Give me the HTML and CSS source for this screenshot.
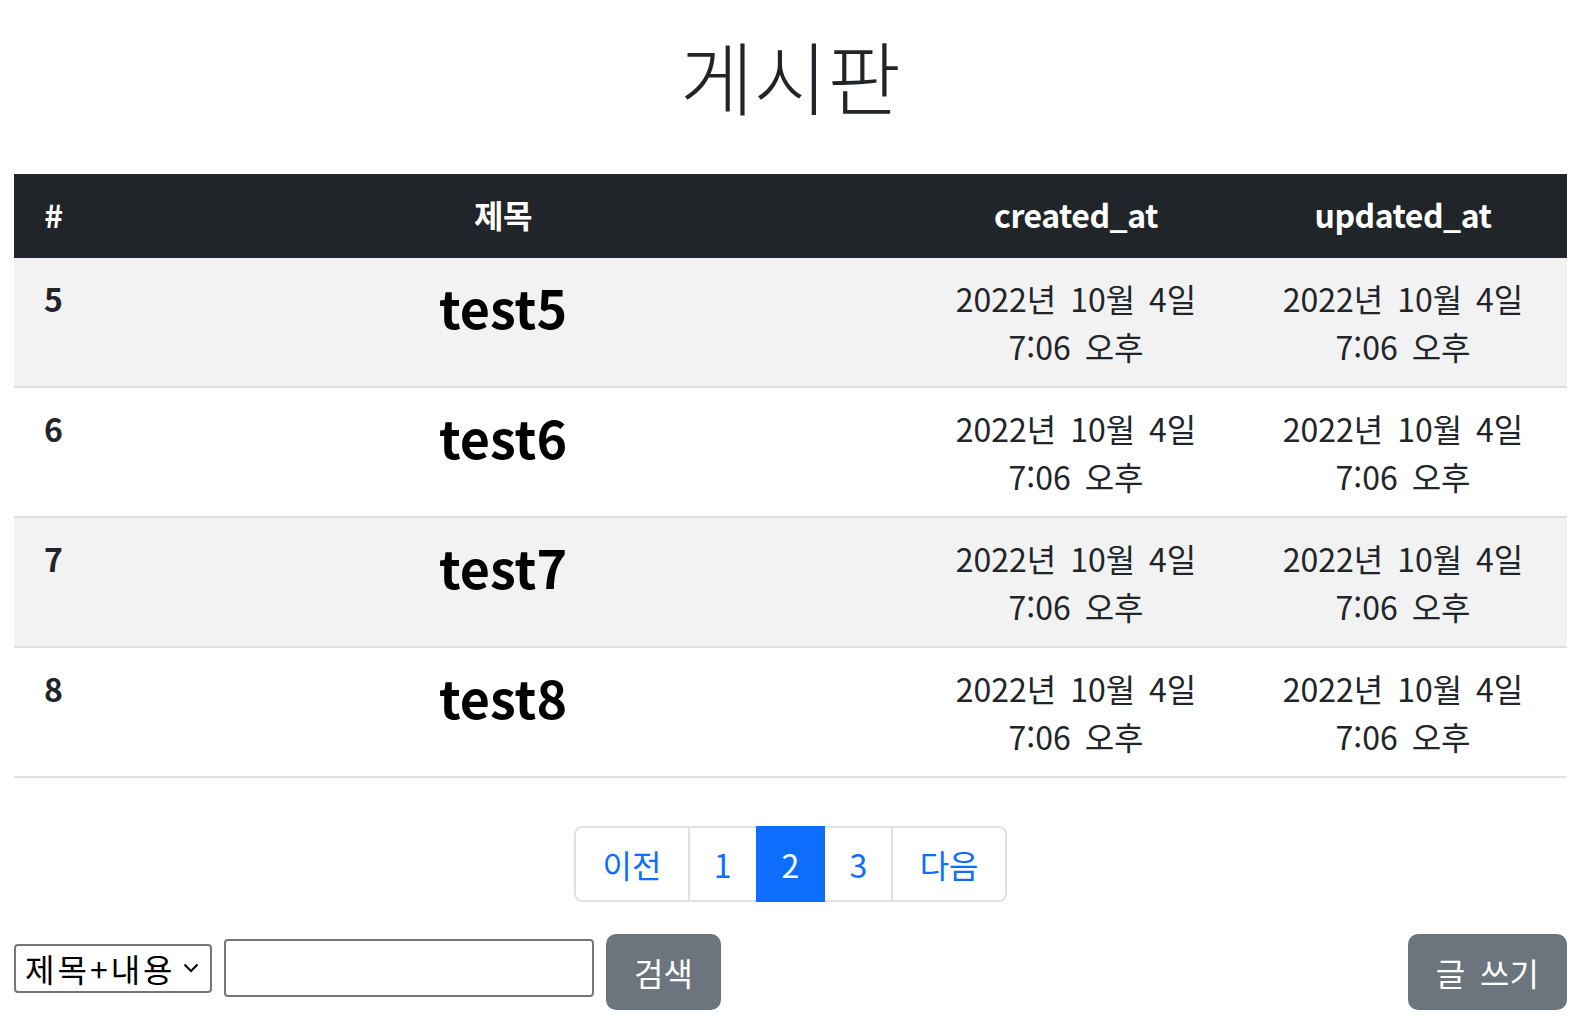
FILE: index.html
```html
<!DOCTYPE html>
<html lang="ko">
<head>
<meta charset="utf-8">
<title>게시판</title>
<link rel="stylesheet" href="styles.css">
</head>
<body>
<div class="page">
  <h1 class="page-title">게시판</h1>
  <table class="board">
    <colgroup>
      <col class="col-num">
      <col class="col-title">
      <col class="col-date">
      <col class="col-date2">
    </colgroup>
    <thead>
      <tr>
        <th>#</th>
        <th>제목</th>
        <th>created_at</th>
        <th>updated_at</th>
      </tr>
    </thead>
    <tbody>
      <tr class="striped">
        <td class="num">5</td>
        <td><h3 class="post-title">test5</h3></td>
        <td class="date">2022년 10월 4일 7:06 오후</td>
        <td class="date">2022년 10월 4일 7:06 오후</td>
      </tr>
      <tr>
        <td class="num">6</td>
        <td><h3 class="post-title">test6</h3></td>
        <td class="date">2022년 10월 4일 7:06 오후</td>
        <td class="date">2022년 10월 4일 7:06 오후</td>
      </tr>
      <tr class="striped">
        <td class="num">7</td>
        <td><h3 class="post-title">test7</h3></td>
        <td class="date">2022년 10월 4일 7:06 오후</td>
        <td class="date">2022년 10월 4일 7:06 오후</td>
      </tr>
      <tr>
        <td class="num">8</td>
        <td><h3 class="post-title">test8</h3></td>
        <td class="date">2022년 10월 4일 7:06 오후</td>
        <td class="date">2022년 10월 4일 7:06 오후</td>
      </tr>
    </tbody>
  </table>

  <nav class="pager">
    <a class="page-link first" href="#">이전</a>
    <a class="page-link" href="#">1</a>
    <a class="page-link active" href="#">2</a>
    <a class="page-link" href="#">3</a>
    <a class="page-link last" href="#">다음</a>
  </nav>

  <div class="bottom-bar">
    <form class="search">
      <select class="search-type">
        <option>제목+내용</option>
        <option>제목</option>
        <option>내용</option>
      </select>
      <input class="search-input" type="text">
      <button class="btn" type="button">검색</button>
    </form>
    <button class="btn btn-write" type="button">글 쓰기</button>
  </div>
</div>
</body>
</html>
```
FILE: styles.css
```css
* { box-sizing: border-box; }

html, body {
  margin: 0;
  padding: 0;
  background: #fff;
}

body {
  font-family: "Noto Sans CJK KR", "Noto Sans", sans-serif;
  color: #212529;
  font-size: 32px;
  line-height: 48px;
}

.page {
  padding: 0 19px 0 14px;
}

.page-title {
  margin: 26px 0 52px;
  font-size: 80px;
  line-height: 96px;
  font-weight: 300;
  text-align: center;
  color: #212529;
}

.board {
  width: 100%;
  border-collapse: collapse;
  table-layout: fixed;
}

.col-num { width: 79px; }
.col-title { width: 820px; }
.col-date { width: 326px; }
.col-date2 { width: 328px; }

.board th {
  background: #212529;
  color: #fff;
  font-weight: 700;
  text-align: center;
  padding: 16px 16px 20px;
  line-height: 48px;
  letter-spacing: -0.5px;
}

.board td {
  padding: 16px;
  text-align: center;
  vertical-align: top;
  border-bottom: 2px solid #dee2e6;
  word-break: keep-all;
  line-height: 48px;
}

.board td.date {
  word-spacing: 5px;
}

.board tr.striped td {
  background: #f2f2f2;
}

.board td.num {
  font-weight: 700;
}

.post-title {
  margin: 0 0 16px;
  font-size: 52px;
  line-height: 66px;
  font-weight: 700;
  color: #000;
}

.pager {
  display: flex;
  justify-content: center;
  margin-top: 48px;
}

.page-link {
  display: block;
  padding: 12px 24px;
  border: 2px solid #dee2e6;
  margin-left: -2px;
  color: #0d6efd;
  text-decoration: none;
  font-size: 32px;
  line-height: 48px;
  background: #fff;
}

.page-link.first {
  margin-left: 0;
  padding: 12px 26.5px;
  border-radius: 8px 0 0 8px;
}

.page-link.last {
  padding: 12px 26.5px;
  border-radius: 0 8px 8px 0;
}

.page-link.active {
  background: #0d6efd;
  border-color: #0d6efd;
  color: #fff;
  position: relative;
}

.bottom-bar {
  display: flex;
  justify-content: space-between;
  align-items: center;
  margin-top: 32px;
}

.search {
  display: flex;
  align-items: center;
  gap: 12px;
  margin: 0;
}

.search-type {
  appearance: none;
  -webkit-appearance: none;
  width: 198px;
  height: 49px;
  margin-bottom: 8px;
  padding: 0 0 0 9px;
  border: 2px solid #767676;
  border-radius: 4px;
  font-family: "Noto Sans CJK KR", sans-serif;
  font-size: 32px;
  line-height: 45px;
  letter-spacing: 3px;
  color: #000;
  background: #fff url("data:image/svg+xml;utf8,<svg xmlns='http://www.w3.org/2000/svg' width='16' height='10' viewBox='0 0 16 10'><path d='M1.5 1.5 L8 8 L14.5 1.5' fill='none' stroke='%23000' stroke-width='2'/></svg>") no-repeat right 11px center;
  background-size: 16px 10px;
}

.search-input {
  width: 370px;
  height: 58px;
  margin-bottom: 8px;
  border: 2px solid #767676;
  border-radius: 4px;
  font-size: 32px;
  padding: 0 8px;
  background: #fff;
}

.btn {
  height: 76px;
  padding: 0 28px;
  border: none;
  border-radius: 10px;
  background: #6c757d;
  color: #fff;
  font-family: "Noto Sans CJK KR", sans-serif;
  font-size: 32px;
  line-height: 48px;
}

.btn-write {
  word-spacing: 6px;
}
```
